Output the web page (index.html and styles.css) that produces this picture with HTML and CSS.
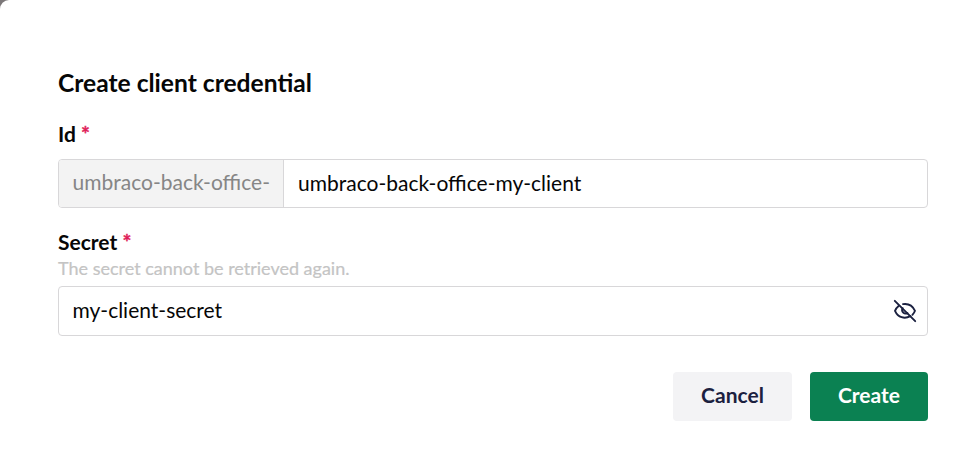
FILE: index.html
```
<!DOCTYPE html>
<html lang="en">
<head>
<meta charset="utf-8">
<title>Create client credential</title>
<link rel="stylesheet" href="styles.css">
</head>
<body>
<main class="dialog">
  <h1 class="title">Create client credential</h1>
  <section class="field">
    <div class="label">Id <span class="required">*</span></div>
    <div class="input">
      <span class="prefix">umbraco-back-office-</span>
      <span class="value">umbraco-back-office-my-client</span>
    </div>
  </section>
  <section class="field secret">
    <div class="label">Secret <span class="required">*</span></div>
    <div class="description">The secret cannot be retrieved again.</div>
    <div class="input">
      <span class="value">my-client-secret</span>
      <svg class="eye" viewBox="0 0 24 24" fill="none" stroke="currentColor" stroke-width="1.9" stroke-linecap="round" stroke-linejoin="round"><path d="M9.6 9.2A3.6 3.6 0 0 0 14.5 14.1"/><path d="M10 5.1C16 4.2 20 7.5 22 11.8Q21.2 14 19.4 15.8"/><path d="M5.6 6.9Q3.2 8.8 2 11.8C5 18.5 11.5 20.4 17.4 17.1"/><path d="M1.8 1.8l20.4 20.4"/></svg>
    </div>
  </section>
  <footer class="actions">
    <button class="button">Cancel</button>
    <button class="button primary">Create</button>
  </footer>
</main>
</body>
</html>
```
FILE: styles.css
```
* { box-sizing: border-box; }
body { margin: 0; background: #7c7879; font-family: Lato, sans-serif; color: #060606; }
.dialog { height: 456px; padding: 66px 48px 0 58px; background: #fff; border-top-left-radius: 9px; }
.title { margin: 0; font-size: 24.6px; line-height: 34px; font-weight: 700; }
.field { margin-top: 19px; }
.label { font-size: 21px; line-height: 30px; font-weight: 700; }
.required { color: #df1e5a; -webkit-text-stroke: 0.4px #df1e5a; }
.input { display: flex; align-items: center; height: 49px; margin-top: 10px; border: 1px solid #d8d7d9; border-radius: 4px; font-size: 21px; overflow: hidden; }
.prefix { display: flex; align-items: center; height: 100%; width: 225px; padding: 0 0 4px 13.5px; background: #f3f3f3; border-right: 1px solid #d8d7d9; color: #868686; }
.value { flex: 1; padding: 0 0 2px 14px; }
.description { font-size: 18px; line-height: 22px; color: #c4c4c4; -webkit-text-stroke: 0.2px #c4c4c4; }
.secret .input { height: 50px; margin-top: 7px; }
.secret .value { padding: 0 0 4px 13.5px; }
.eye { width: 24px; height: 24px; margin-right: 10px; color: #1b2140; }
.actions { display: flex; justify-content: flex-end; gap: 18px; margin-top: 36px; }
.button { width: 119px; height: 49px; padding: 0 0 4px; border: 0; border-radius: 4px; background: #f3f3f5; color: #1b2140; font: 700 21px Lato, sans-serif; }
.primary { width: 118px; background: #0b8152; color: #fff; }
```
